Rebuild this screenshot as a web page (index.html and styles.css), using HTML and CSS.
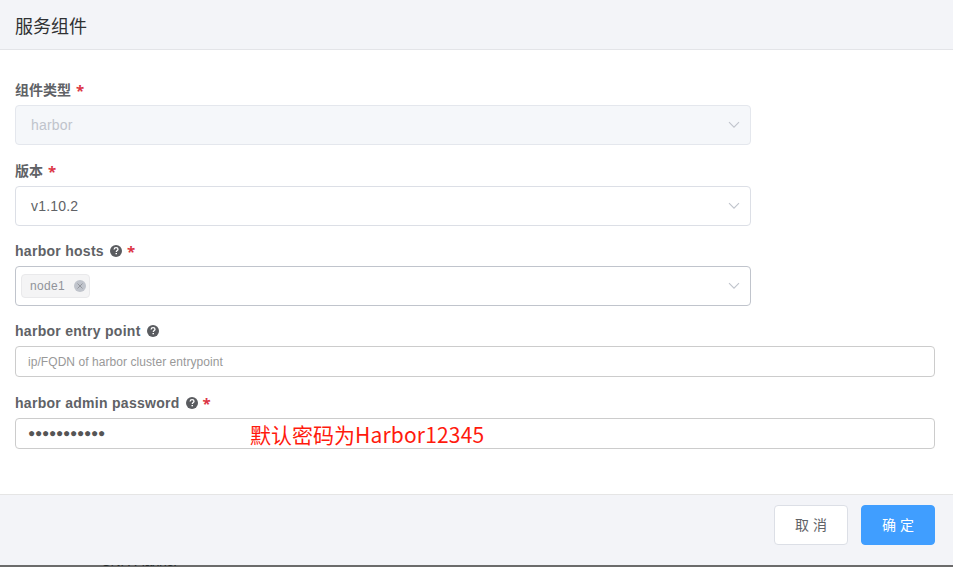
FILE: index.html
```html
<!DOCTYPE html>
<html lang="zh-CN">
<head>
<meta charset="utf-8">
<title>服务组件</title>
<link rel="stylesheet" href="styles.css">
</head>
<body>
<svg width="0" height="0" class="defs" aria-hidden="true">
  <symbol id="help" viewBox="0 0 12 12"><circle cx="6" cy="6" r="6" fill="#5a5c60"/><path d="M4.1 4.5C4.2 3.3 5 2.7 6.1 2.7c1.1 0 1.9.6 1.9 1.5C8 5.500 6.300 5.500 6.300 7" fill="none" stroke="#fff" stroke-width="1.300"/><path d="M5.500 7.900h1.500v1.400H5.500z" fill="#fff"/></symbol>
  <symbol id="chevron" viewBox="0 0 12 8"><path d="M1 1.200l5 5 5-5" fill="none" stroke="#c0c4cc" stroke-width="1.100"/></symbol>
</svg>
<div class="dialog">
  <header class="dialog-header"><h1>服务组件</h1></header>
  <main class="dialog-body">
    <div class="field first">
      <label><span>组件类型</span><i>*</i></label>
      <div class="select disabled"><span>harbor</span><svg class="chevron"><use href="#chevron"/></svg></div>
    </div>
    <div class="field second">
      <label><span>版本</span><i>*</i></label>
      <div class="select"><span>v1.10.2</span><svg class="chevron"><use href="#chevron"/></svg></div>
    </div>
    <div class="field">
      <label><span>harbor hosts</span><svg class="help"><use href="#help"/></svg><i>*</i></label>
      <div class="select hover"><div class="tag"><span>node1</span><svg class="close" viewBox="0 0 12 12"><circle cx="6" cy="6" r="6" fill="#c0c4cc"/><path d="M3.500 3.500l5 5M8.500 3.500l-5 5" stroke="#909399" stroke-width=".9"/></svg></div><svg class="chevron"><use href="#chevron"/></svg></div>
    </div>
    <div class="field entry">
      <label><span>harbor entry point</span><svg class="help"><use href="#help"/></svg></label>
      <div class="input"><span class="placeholder">ip/FQDN of harbor cluster entrypoint</span></div>
    </div>
    <div class="field last">
      <label><span>harbor admin password</span><svg class="help"><use href="#help"/></svg><i>*</i></label>
      <div class="input"><span class="dots">●●●●●●●●●●●</span><span class="note">默认密码为<b>Harbor12345</b></span></div>
    </div>
  </main>
  <footer class="dialog-footer">
    <button class="btn">取 消</button>
    <button class="btn primary">确 定</button>
  </footer>
</div>
<div class="backdrop"><span>CNI : Flannel</span></div>
</body>
</html>
```
FILE: styles.css
```css
* { box-sizing: border-box; }
body { margin: 0; height: 567px; overflow: hidden; background: #6b6b6b; color: #606266; font-family: "Liberation Sans", "Noto Sans CJK SC", sans-serif; font-size: 14px; }
.defs { position: absolute; }
.dialog { height: 565px; background: #fff; display: flex; flex-direction: column; }
.dialog-header { height: 50px; padding-left: 15px; display: flex; align-items: center; background: #f3f4f8; border-bottom: 1px solid #e3e4e8; }
h1 { margin: 4px 0 0; font-size: 18px; font-weight: 400; line-height: 26px; color: #303133; }
.dialog-body { flex: 1; padding: 30px 18px 0 15px; }
.field { margin-bottom: 15px; }
.field.first, .field.entry { margin-bottom: 16px; }
label { display: flex; align-items: center; height: 25px; padding-bottom: 5px; font-weight: 700; line-height: 20px; }
label > span { letter-spacing: .28px; }
.first > label > span, .second > label > span { letter-spacing: 0; }
.help { width: 12px; height: 12px; margin-left: 6px; }
label i { margin-left: 5px; color: #dc3545; font-style: normal; font-family: "Noto Sans", sans-serif; font-size: 15px; line-height: 20px; height: 20px; }
.select { display: flex; align-items: center; width: 736px; height: 40px; padding: 0 10px 0 15px; border: 1px solid #dcdfe6; border-radius: 4px; background: #fff; letter-spacing: .2px; }
.select.disabled { background: #f5f7fa; border-color: #e4e7ed; color: #c0c4cc; }
.select.hover { border-color: #c0c4cc; padding-left: 5px; }
.chevron { width: 12px; height: 8px; margin-left: auto; }
.tag { display: flex; align-items: center; width: 69px; height: 24px; padding: 0 3px 0 8px; background: #f4f4f5; border: 1px solid #e9e9eb; border-radius: 4px; color: #909399; font-size: 12px; letter-spacing: .35px; }
.close { width: 12px; height: 12px; margin-left: auto; }
.input { position: relative; display: flex; align-items: center; height: 31px; padding: 0 12px; border: 1px solid #ccc; border-radius: 4px; }
.placeholder { color: #999; font-size: 12px; letter-spacing: .06px; }
.dots { padding-bottom: 1px; font-size: 12px; letter-spacing: -.25px; color: #555; }
.note { position: absolute; left: 234px; top: 0; color: #ff1a0d; font-family: "Noto Sans CJK SC", sans-serif; font-size: 21px; font-weight: 400; line-height: 30px; white-space: nowrap; }
.note b { font-weight: 400; letter-spacing: .18px; }
.dialog-footer { height: 71px; padding: 10px 18px 0 0; display: flex; justify-content: flex-end; gap: 13px; background: #f3f4f8; border-top: 1px solid #e5e5e5; }
.btn { width: 74px; height: 40px; padding: 0 0 2px; border: 1px solid #dcdfe6; border-radius: 4px; background: #fff; color: #606266; font: 14px "Liberation Sans", "Noto Sans CJK SC", sans-serif; }
.btn.primary { background: #409eff; border-color: #409eff; color: #fff; }
.backdrop { height: 2px; overflow: hidden; padding-left: 101px; color: #252a2b; line-height: 16px; }
.backdrop span { display: block; margin-top: -12px; letter-spacing: -.5px; }
```
